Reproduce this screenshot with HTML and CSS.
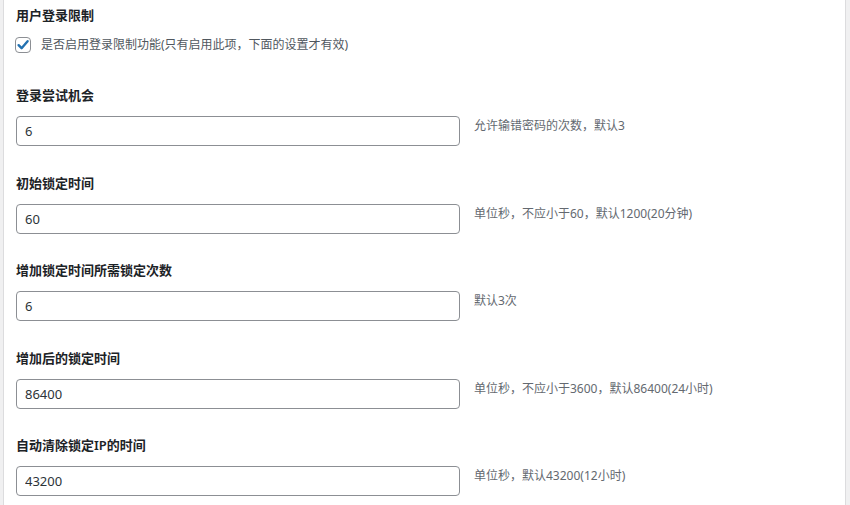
FILE: index.html
```html
<!DOCTYPE html>
<html lang="zh-CN">
<head>
    <meta charset="UTF-8">
    <title>用户登录限制</title>
    <link rel="stylesheet" href="styles.css">
</head>
<body>
    <div class="panel">
        <h3 class="title">用户登录限制</h3>
        <label class="check-row">
            <span class="checkbox">
                <svg width="16" height="16" viewBox="0 0 16 16">
                    <path d="M3.6 8.2 L6.6 11.2 L12.6 4.2" fill="none" stroke="#2271b1" stroke-width="2.4" stroke-linecap="round" stroke-linejoin="round"/>
                </svg>
            </span>
            <span class="check-text">是否启用登录限制功能(只有启用此项，下面的设置才有效)</span>
        </label>

        <div class="field">
            <label class="field-label">登录尝试机会</label>
            <div class="field-row">
                <input type="text" value="6">
                <span class="desc">允许输错密码的次数，默认3</span>
            </div>
        </div>

        <div class="field">
            <label class="field-label">初始锁定时间</label>
            <div class="field-row">
                <input type="text" value="60">
                <span class="desc">单位秒，不应小于60，默认1200(20分钟)</span>
            </div>
        </div>

        <div class="field">
            <label class="field-label">增加锁定时间所需锁定次数</label>
            <div class="field-row">
                <input type="text" value="6">
                <span class="desc">默认3次</span>
            </div>
        </div>

        <div class="field">
            <label class="field-label">增加后的锁定时间</label>
            <div class="field-row">
                <input type="text" value="86400">
                <span class="desc">单位秒，不应小于3600，默认86400(24小时)</span>
            </div>
        </div>

        <div class="field">
            <label class="field-label">自动清除锁定IP的时间</label>
            <div class="field-row">
                <input type="text" value="43200">
                <span class="desc">单位秒，默认43200(12小时)</span>
            </div>
        </div>
    </div>
</body>
</html>
```

FILE: styles.css
```css
html, body {
    margin: 0;
    padding: 0;
    background: #f0f0f1;
    font-family: "Noto Sans", "Noto Sans CJK SC", sans-serif;
    color: #1d2327;
    overflow: hidden;
}

.panel {
    margin: 0 4px 0 3px;
    height: 505px;
    background: #fff;
    border-left: 1px solid #dcdcde;
    border-right: 1px solid #dcdcde;
    padding: 5px 12px 0 12px;
    box-sizing: border-box;
}

.title {
    margin: 0;
    font-size: 13px;
    font-weight: 600;
    line-height: 20px;
}

.check-row {
    display: flex;
    align-items: center;
    margin-top: 12px;
    height: 16px;
}

.checkbox {
    width: 16px;
    height: 16px;
    box-sizing: border-box;
    border: 1px solid #8c8f94;
    border-radius: 4px;
    margin-left: -1px;
    display: flex;
    align-items: center;
    justify-content: center;
}

.checkbox svg {
    display: block;
    flex: none;
}

.check-text {
    margin-left: 10px;
    font-size: 12px;
    line-height: 20px;
    color: #50575e;
}

.field {
    padding-bottom: 26.5px;
}

.check-row + .field {
    margin-top: 32px;
}

.field-label {
    display: block;
    font-size: 13px;
    font-weight: 600;
    line-height: 20px;
}

.field-row {
    display: flex;
    align-items: flex-start;
    margin-top: 11px;
}

.field-row input {
    width: 444px;
    height: 30px;
    box-sizing: border-box;
    border: 1px solid #8c8f94;
    border-radius: 4px;
    padding: 0 8px;
    font-family: "Noto Sans", sans-serif;
    font-size: 13px;
    color: #2c3338;
    background: #fff;
    outline: none;
}

.desc {
    margin-left: 14px;
    font-size: 12px;
    line-height: 20px;
    color: #646970;
}
```
